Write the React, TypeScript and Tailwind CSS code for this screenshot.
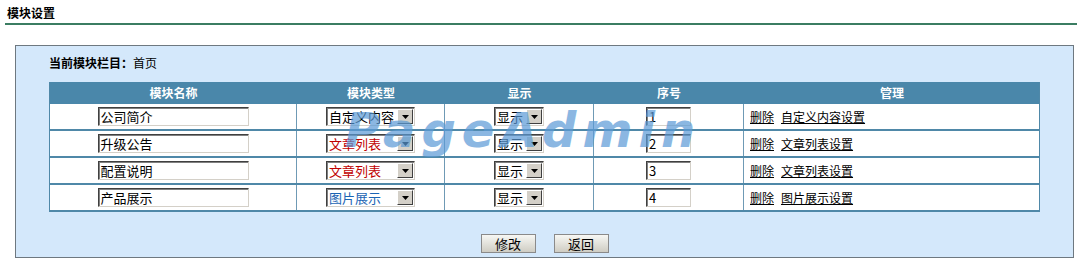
import React from "react";

const FONT = '"Noto Sans CJK SC", "Noto Sans", sans-serif';

function TextInput({ value, w }: { value: string; w: string }) {
  return (
    <div
      className={`${w} h-[19px] bg-white border border-t-[#404040] border-l-[#404040] border-b-[#d4d0c8] border-r-[#d4d0c8] shadow-[inset_1px_1px_0_#808080] flex items-center pl-[2px] text-[13px] leading-none text-black overflow-hidden whitespace-nowrap`}
    >
      {value}
    </div>
  );
}

function DropBtn() {
  return (
    <div className="w-[16px] h-[15px] bg-[#d4d0c8] border border-t-[#ffffff] border-l-[#ffffff] border-b-[#404040] border-r-[#404040] flex items-center justify-center shrink-0">
      <svg width="7" height="4" viewBox="0 0 7 4">
        <path d="M0 0 L7 0 L3.5 4 Z" fill="#000" />
      </svg>
    </div>
  );
}

function Select({ value, w, color }: { value: string; w: string; color: string }) {
  return (
    <div
      className={`${w} h-[19px] bg-white border border-t-[#404040] border-l-[#404040] border-b-[#d4d0c8] border-r-[#d4d0c8] shadow-[inset_1px_1px_0_#808080] flex items-center justify-between pl-[2px] pr-[1px] text-[13px] leading-none overflow-hidden whitespace-nowrap`}
    >
      <span className={color}>{value}</span>
      <DropBtn />
    </div>
  );
}

const rows = [
  { name: "公司简介", type: "自定义内容", typeColor: "text-black", order: "1", link: "自定义内容设置" },
  { name: "升级公告", type: "文章列表", typeColor: "text-[#c00000]", order: "2", link: "文章列表设置" },
  { name: "配置说明", type: "文章列表", typeColor: "text-[#c00000]", order: "3", link: "文章列表设置" },
  { name: "产品展示", type: "图片展示", typeColor: "text-[#1a64b4]", order: "4", link: "图片展示设置" },
];

const cols = "grid grid-cols-[247px_148px_149px_150px_296px]";

export default function App() {
  return (
    <div className="w-[1077px] h-[272px] bg-white overflow-hidden text-black" style={{ fontFamily: FONT }}>
      <div className="ml-[5px] h-[25px] border-b-2 border-[#3b7d62] pl-[2px] pt-[6px] text-[12px] font-bold leading-[14px]">
        模块设置
      </div>
      <div className="relative ml-[15px] mt-[20px] w-[1059px] h-[213px] border border-[#6e7880] bg-[#d4e8fb] pl-[33px] pt-[9px]">
        <div className="h-[16px] text-[12px] leading-[16px]">
          <span className="font-bold">当前模块栏目：</span>
          <span>首页</span>
        </div>
        <div className="mt-[11px] w-[991px] border-l border-r border-[#4f88a8]">
          <div className={`${cols} h-[22px] bg-[#4a87aa] text-white font-bold text-[12px]`}>
            {["模块名称", "模块类型", "显示", "序号", "管理"].map((h) => (
              <div key={h} className="flex items-center justify-center">
                {h}
              </div>
            ))}
          </div>
          {rows.map((r) => (
            <div key={r.order} className={`${cols} h-[27px] bg-white border-b-2 border-[#4f88a8]`}>
              <div className="flex items-center justify-center border-r border-[#6f9ab5]">
                <TextInput value={r.name} w="w-[151px]" />
              </div>
              <div className="flex items-center justify-center border-r border-[#6f9ab5]">
                <Select value={r.type} w="w-[89px]" color={r.typeColor} />
              </div>
              <div className="flex items-center justify-center border-r border-[#6f9ab5]">
                <Select value="显示" w="w-[50px]" color="text-black" />
              </div>
              <div className="flex items-center justify-center border-r border-[#6f9ab5]">
                <TextInput value={r.order} w="w-[45px]" />
              </div>
              <div className="flex items-center pl-[6px] text-[12px] gap-[7px]">
                <span className="underline">删除</span>
                <span className="underline">{r.link}</span>
              </div>
            </div>
          ))}
        </div>
        <div className="w-[991px] mt-[22px] flex justify-center gap-[18px]">
          {["修改", "返回"].map((b) => (
            <div
              key={b}
              className="w-[55px] h-[19px] border border-[#8a8a8a] bg-gradient-to-b from-[#f7f7f4] to-[#cfcdc3] flex items-center justify-center text-[13px] leading-none"
            >
              {b}
            </div>
          ))}
        </div>
        <div
          className="pointer-events-none absolute left-[329px] top-[60px] text-[48px] font-bold italic leading-none tracking-[6px] text-[#5b9ad6] opacity-70"
          style={{ fontFamily: '"DejaVu Sans", sans-serif' }}
        >
          PageAdmin
        </div>
      </div>
    </div>
  );
}
